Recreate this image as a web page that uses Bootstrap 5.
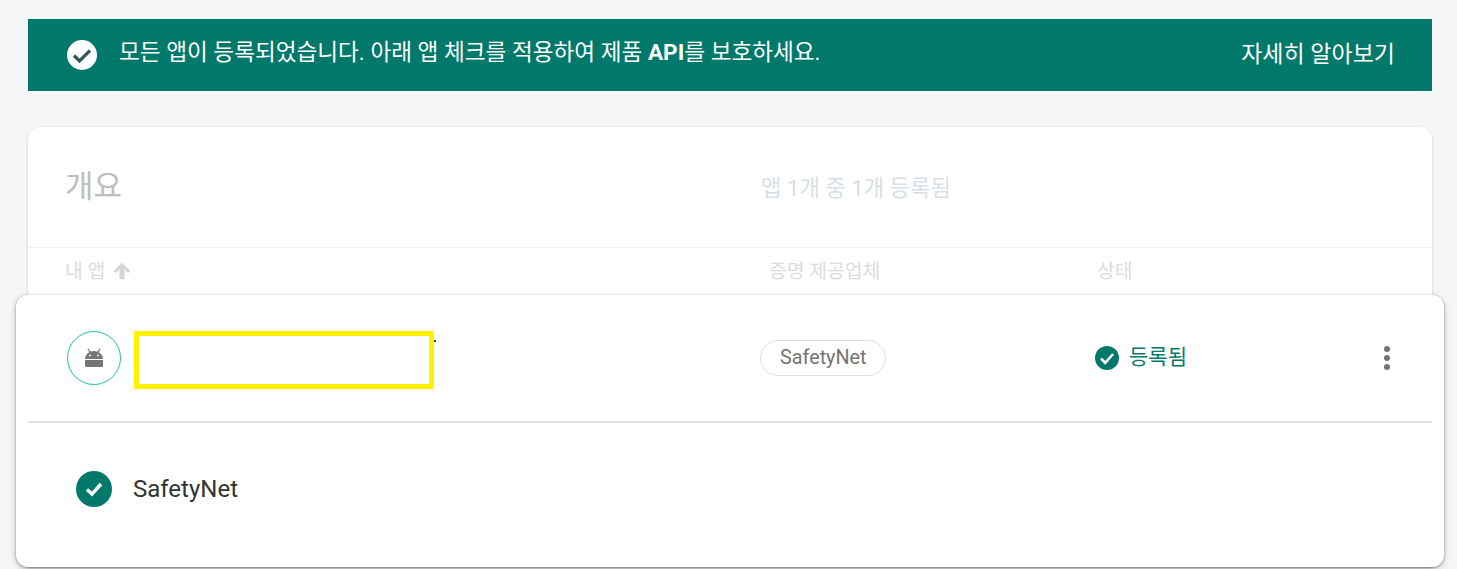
<!DOCTYPE html>
<html lang="ko">
<head>
    <meta charset="UTF-8">
    <meta name="viewport" content="width=device-width, initial-scale=1.0">
    <title>App Check</title>
    <link href="https://cdn.jsdelivr.net/npm/bootstrap@5.3.0/dist/css/bootstrap.min.css" rel="stylesheet">
    <style>
        html, body { height: 569px; overflow: hidden; }
        body { background-color: #f5f6f8; font-family: Roboto, "Noto Sans CJK KR", sans-serif; color: #212121; }
        .page-wrap { padding: 19px 25px 0 28px; }
        .done-banner { height: 72px; background-color: #00796b; color: #fff; padding: 0 37px 0 39px; margin-bottom: 36px; font-size: 22.6px; }
        .done-banner .banner-text { margin-left: 22px; margin-top: -4px; }
        .done-banner .banner-link { font-size: 23px; color: #fff; text-decoration: none; }
        .overview-card { background: #fff; border-radius: 12px 12px 0 0; box-shadow: 0 1px 3px rgba(60,64,67,.25); }
        .overview-head { height: 121px; border-bottom: 1px solid #f0f0f0; padding-left: 37px; }
        .overview-title { font-size: 31px; color: #bdbdbd; width: 696px; }
        .overview-count { font-size: 22.2px; color: #d6dfe5; margin-top: 4px; }
        .table-head { height: 47px; padding: 2px 0 0 37px; font-size: 19.3px; color: #dcdcdc; }
        .col-app { width: 704px; }
        .col-app svg { margin-top: -3px; margin-left: -1px; }
        .col-provider { width: 328px; }
        .app-panel { margin: 0 -12px; height: 272px; background: #fff; border-radius: 12px; box-shadow: 0 1px 3px rgba(60,64,67,.55), 0 2px 8px rgba(60,64,67,.18); }
        .app-row { height: 126px; padding-left: 51px; }
        .app-divider { height: 2px; margin: 0 12px; background-color: #e0e0e0; }
        .app-avatar { width: 54px; height: 54px; border: 1px solid #1fc1a8; border-radius: 50%; flex: none; }
        .redact-box { width: 300px; height: 58px; border: 5px solid #fff200; margin-left: 13px; margin-top: 3px; flex: none; }
        .redact-dot { width: 2px; height: 2px; background: #333; margin-top: -34px; flex: none; }
        .cell-provider { margin-left: 324px; width: 335px; flex: none; }
        .provider-chip { font-size: 19.8px; color: #757575; border: 1px solid #dadce0; border-radius: 18px; height: 36px; padding: 0 18px 0 19px; line-height: 34px; }
        .status-text { color: #00796b; font-size: 21px; margin-left: 10px; }
        .kebab { margin-left: 196px; }
        .service-row { padding: 48px 0 0 60px; font-size: 24px; color: #333; }
        .service-row span { margin-left: 21px; margin-top: -1px; }
    </style>
</head>
<body>
    <div class="page-wrap">
        <!-- Banner -->
        <div class="done-banner d-flex align-items-center">
            <svg width="30" height="30" viewBox="0 0 30 30"><circle cx="15" cy="15" r="15" fill="#fff"/><path d="M7 15.500l5.500 5.500L23 10.500" fill="none" stroke="#37575a" stroke-width="3.200"/></svg>
            <div class="banner-text flex-grow-1">모든 앱이 등록되었습니다. 아래 앱 체크를 적용하여 제품 <b>API</b>를 보호하세요.</div>
            <a class="banner-link" href="#">자세히 알아보기</a>
        </div>

        <!-- Overview -->
        <div class="overview-card">
            <div class="overview-head d-flex align-items-center">
                <div class="overview-title">개요</div>
                <div class="overview-count">앱 1개 중 1개 등록됨</div>
            </div>
            <div class="table-head d-flex align-items-center">
                <div class="col-app d-flex align-items-center gap-2">내 앱
                    <svg width="20" height="20" viewBox="0 0 24 24" fill="#d4d4d4"><path d="M2 12l2.500 2.500L9 10v12h6V10l4.500 4.500L22 12 12 2z"/></svg>
                </div>
                <div class="col-provider">증명 제공업체</div>
                <div>상태</div>
            </div>

            <div class="app-panel">
                <div class="app-row d-flex align-items-center">
                    <div class="app-avatar d-flex align-items-center justify-content-center">
                        <svg width="20" height="20" viewBox="0 0 20 20" fill="#757575"><path d="M1 11a9 8 0 0 1 18 0zM3.400 1.300l1-.7 2.300 3.200-1 .7zM16.600 1.300l-1-.7-2.300 3.200 1 .7z"/><path d="M1 12h18v5.500a1.500 1.500 0 0 1-1.500 1.500h-15A1.500 1.500 0 0 1 1 17.500z"/><circle cx="6" cy="7.500" r=".9" fill="#fff"/><circle cx="14" cy="7.500" r=".9" fill="#fff"/></svg>
                    </div>
                    <div class="redact-box"></div>
                    <div class="redact-dot"></div>
                    <div class="cell-provider"><span class="provider-chip d-inline-block">SafetyNet</span></div>
                    <svg width="24" height="24" viewBox="0 0 24 24"><circle cx="12" cy="12" r="12" fill="#00796b"/><path d="M6 12.500l4.300 4.300L18 8" fill="none" stroke="#fff" stroke-width="2.600"/></svg>
                    <div class="status-text">등록됨</div>
                    <svg class="kebab" width="8" height="26" viewBox="0 0 8 26" fill="#757575"><circle cx="4" cy="4" r="3"/><circle cx="4" cy="13" r="3"/><circle cx="4" cy="22" r="3"/></svg>
                </div>
                <div class="app-divider"></div>
                <div class="service-row d-flex align-items-center">
                    <svg width="36" height="36" viewBox="0 0 36 36"><circle cx="18" cy="18" r="18" fill="#00796b"/><path d="M11 18.500l5 4.500 9-10" fill="none" stroke="#fff" stroke-width="3.400"/></svg>
                    <span>SafetyNet</span>
                </div>
            </div>
        </div>
    </div>
    <script src="https://cdn.jsdelivr.net/npm/bootstrap@5.3.0/dist/js/bootstrap.bundle.min.js"></script>
</body>
</html>
